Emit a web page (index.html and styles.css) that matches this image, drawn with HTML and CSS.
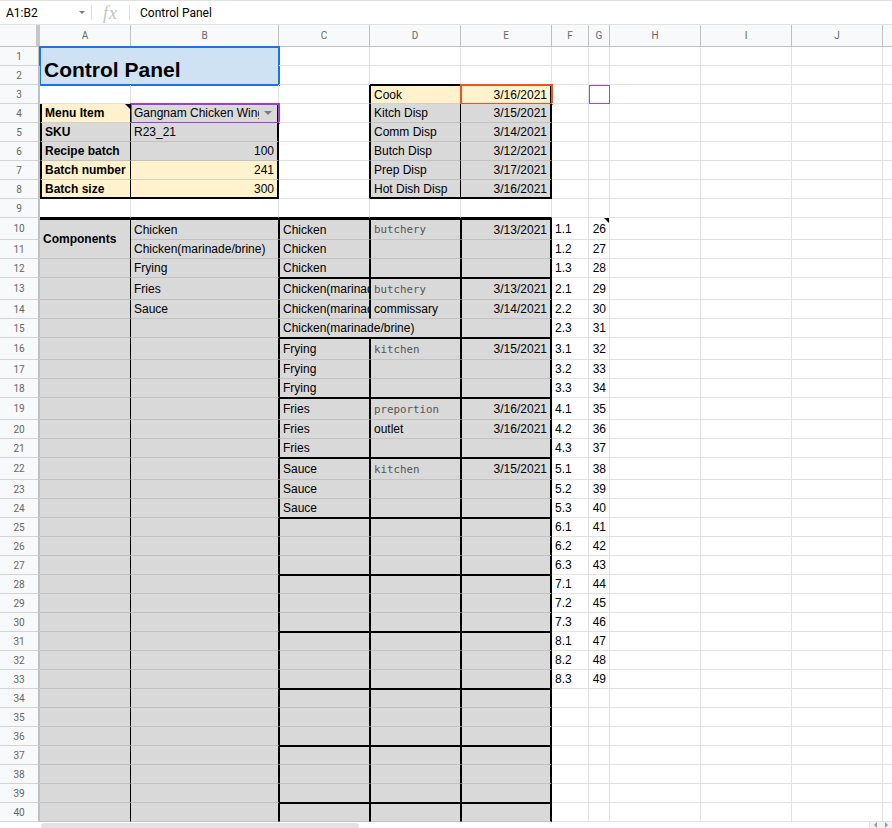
FILE: index.html
```html
<!DOCTYPE html>
<html lang="en">
<head>
<meta charset="utf-8">
<title>Control Panel</title>
<link rel="stylesheet" href="styles.css">
</head>
<body>
<div class="fbar">
  <div class="namebox"><span class="nb-text">A1:B2</span><span class="nb-arrow"></span></div>
  <div class="fsep"></div>
  <div class="fx">fx</div>
  <div class="fsep"></div>
  <div class="fcontent">Control Panel</div>
</div>
<div class="sheet">
<div class="corner"></div><div class="ch">A</div><div class="ch">B</div><div class="ch">C</div><div class="ch">D</div><div class="ch">E</div><div class="ch">F</div><div class="ch">G</div><div class="ch">H</div><div class="ch">I</div><div class="ch">J</div><div class="ch"></div>

<div class="rh">1</div><div class="c title">Control Panel</div><div class="c"></div><div class="c"></div><div class="c"></div><div class="c"></div><div class="c"></div><div class="c"></div><div class="c"></div><div class="c"></div><div class="c"></div>

<div class="rh">2</div><div class="c"></div><div class="c kb"></div><div class="c kb"></div><div class="c"></div><div class="c"></div><div class="c"></div><div class="c"></div><div class="c"></div><div class="c"></div>

<div class="rh">3</div><div class="c"></div><div class="c"></div><div class="c kr"></div><div class="c y kl kt kr">Cook</div><div class="c y r kt kR so">3/16/2021</div><div class="c"></div><div class="c sp"></div><div class="c"></div><div class="c"></div><div class="c"></div><div class="c"></div>

<div class="rh">4</div><div class="c y b kL kr note">Menu Item</div><div class="c g kR dd sp2"><span class="ddt">Gangnam Chicken Wings</span><span class="dda"></span></div><div class="c kr"></div><div class="c g kl kr">Kitch Disp</div><div class="c g r kR">3/15/2021</div><div class="c"></div><div class="c"></div><div class="c"></div><div class="c"></div><div class="c"></div><div class="c"></div>

<div class="rh">5</div><div class="c g b kL kr">SKU</div><div class="c g kR">R23_21</div><div class="c kr"></div><div class="c g kl kr">Comm Disp</div><div class="c g r kR">3/14/2021</div><div class="c"></div><div class="c"></div><div class="c"></div><div class="c"></div><div class="c"></div><div class="c"></div>

<div class="rh">6</div><div class="c g b kL kr">Recipe batch</div><div class="c g r kR">100</div><div class="c kr"></div><div class="c g kl kr">Butch Disp</div><div class="c g r kR">3/12/2021</div><div class="c"></div><div class="c"></div><div class="c"></div><div class="c"></div><div class="c"></div><div class="c"></div>

<div class="rh">7</div><div class="c y b kL kr">Batch number</div><div class="c y r kR">241</div><div class="c kr"></div><div class="c g kl kr">Prep Disp</div><div class="c g r kR">3/17/2021</div><div class="c"></div><div class="c"></div><div class="c"></div><div class="c"></div><div class="c"></div><div class="c"></div>

<div class="rh">8</div><div class="c y b kL kr kB">Batch size</div><div class="c y r kR kB">300</div><div class="c kr"></div><div class="c g kl kr kB">Hot Dish Disp</div><div class="c g r kR kB">3/16/2021</div><div class="c"></div><div class="c"></div><div class="c"></div><div class="c"></div><div class="c"></div><div class="c"></div>

<div class="rh">9</div><div class="c kb"></div><div class="c kb"></div><div class="c kb"></div><div class="c kb"></div><div class="c kb"></div><div class="c"></div><div class="c"></div><div class="c"></div><div class="c"></div><div class="c"></div><div class="c"></div>

<div class="rh">10</div><div class="c g kr kT b rs2">Components</div><div class="c g kr kT">Chicken</div><div class="c g kl kr kT">Chicken</div><div class="c g kl kr kT m">butchery</div><div class="c g kl kR kT r">3/13/2021</div><div class="c">1.1</div><div class="c r note">26</div><div class="c"></div><div class="c"></div><div class="c"></div><div class="c"></div>

<div class="rh">11</div><div class="c g kr">Chicken(marinade/brine)</div><div class="c g kl kr">Chicken</div><div class="c g kl kr"></div><div class="c g kl kR"></div><div class="c">1.2</div><div class="c r">27</div><div class="c"></div><div class="c"></div><div class="c"></div><div class="c"></div>

<div class="rh">12</div><div class="c g kr"></div><div class="c g kr">Frying</div><div class="c g kl kr kb">Chicken</div><div class="c g kl kr kb"></div><div class="c g kl kR kb"></div><div class="c">1.3</div><div class="c r">28</div><div class="c"></div><div class="c"></div><div class="c"></div><div class="c"></div>

<div class="rh">13</div><div class="c g kr"></div><div class="c g kr">Fries</div><div class="c g kl kr kt">Chicken(marinade/brine)</div><div class="c g kl kr kt m">butchery</div><div class="c g kl kR kt r">3/13/2021</div><div class="c">2.1</div><div class="c r">29</div><div class="c"></div><div class="c"></div><div class="c"></div><div class="c"></div>

<div class="rh">14</div><div class="c g kr"></div><div class="c g kr">Sauce</div><div class="c g kl kr">Chicken(marinade/brine)</div><div class="c g kl kr">commissary</div><div class="c g kl kR r">3/14/2021</div><div class="c">2.2</div><div class="c r">30</div><div class="c"></div><div class="c"></div><div class="c"></div><div class="c"></div>

<div class="rh">15</div><div class="c g kr"></div><div class="c g kr"></div><div class="c g kl kr kb cs2">Chicken(marinade/brine)</div><div class="c g kl kR kb"></div><div class="c">2.3</div><div class="c r">31</div><div class="c"></div><div class="c"></div><div class="c"></div><div class="c"></div>

<div class="rh">16</div><div class="c g kr"></div><div class="c g kr"></div><div class="c g kl kr kt">Frying</div><div class="c g kl kr kt m">kitchen</div><div class="c g kl kR kt r">3/15/2021</div><div class="c">3.1</div><div class="c r">32</div><div class="c"></div><div class="c"></div><div class="c"></div><div class="c"></div>

<div class="rh">17</div><div class="c g kr"></div><div class="c g kr"></div><div class="c g kl kr">Frying</div><div class="c g kl kr"></div><div class="c g kl kR"></div><div class="c">3.2</div><div class="c r">33</div><div class="c"></div><div class="c"></div><div class="c"></div><div class="c"></div>

<div class="rh">18</div><div class="c g kr"></div><div class="c g kr"></div><div class="c g kl kr kb">Frying</div><div class="c g kl kr kb"></div><div class="c g kl kR kb"></div><div class="c">3.3</div><div class="c r">34</div><div class="c"></div><div class="c"></div><div class="c"></div><div class="c"></div>

<div class="rh">19</div><div class="c g kr"></div><div class="c g kr"></div><div class="c g kl kr kt">Fries</div><div class="c g kl kr kt m">preportion</div><div class="c g kl kR kt r">3/16/2021</div><div class="c">4.1</div><div class="c r">35</div><div class="c"></div><div class="c"></div><div class="c"></div><div class="c"></div>

<div class="rh">20</div><div class="c g kr"></div><div class="c g kr"></div><div class="c g kl kr">Fries</div><div class="c g kl kr">outlet</div><div class="c g kl kR r">3/16/2021</div><div class="c">4.2</div><div class="c r">36</div><div class="c"></div><div class="c"></div><div class="c"></div><div class="c"></div>

<div class="rh">21</div><div class="c g kr"></div><div class="c g kr"></div><div class="c g kl kr kb">Fries</div><div class="c g kl kr kb"></div><div class="c g kl kR kb"></div><div class="c">4.3</div><div class="c r">37</div><div class="c"></div><div class="c"></div><div class="c"></div><div class="c"></div>

<div class="rh">22</div><div class="c g kr"></div><div class="c g kr"></div><div class="c g kl kr kt">Sauce</div><div class="c g kl kr kt m">kitchen</div><div class="c g kl kR kt r">3/15/2021</div><div class="c">5.1</div><div class="c r">38</div><div class="c"></div><div class="c"></div><div class="c"></div><div class="c"></div>

<div class="rh">23</div><div class="c g kr"></div><div class="c g kr"></div><div class="c g kl kr">Sauce</div><div class="c g kl kr"></div><div class="c g kl kR"></div><div class="c">5.2</div><div class="c r">39</div><div class="c"></div><div class="c"></div><div class="c"></div><div class="c"></div>

<div class="rh">24</div><div class="c g kr"></div><div class="c g kr"></div><div class="c g kl kr kb">Sauce</div><div class="c g kl kr kb"></div><div class="c g kl kR kb"></div><div class="c">5.3</div><div class="c r">40</div><div class="c"></div><div class="c"></div><div class="c"></div><div class="c"></div>

<div class="rh">25</div><div class="c g kr"></div><div class="c g kr"></div><div class="c g kl kr kt"></div><div class="c g kl kr kt"></div><div class="c g kl kR kt"></div><div class="c">6.1</div><div class="c r">41</div><div class="c"></div><div class="c"></div><div class="c"></div><div class="c"></div>

<div class="rh">26</div><div class="c g kr"></div><div class="c g kr"></div><div class="c g kl kr"></div><div class="c g kl kr"></div><div class="c g kl kR"></div><div class="c">6.2</div><div class="c r">42</div><div class="c"></div><div class="c"></div><div class="c"></div><div class="c"></div>

<div class="rh">27</div><div class="c g kr"></div><div class="c g kr"></div><div class="c g kl kr kb"></div><div class="c g kl kr kb"></div><div class="c g kl kR kb"></div><div class="c">6.3</div><div class="c r">43</div><div class="c"></div><div class="c"></div><div class="c"></div><div class="c"></div>

<div class="rh">28</div><div class="c g kr"></div><div class="c g kr"></div><div class="c g kl kr kt"></div><div class="c g kl kr kt"></div><div class="c g kl kR kt"></div><div class="c">7.1</div><div class="c r">44</div><div class="c"></div><div class="c"></div><div class="c"></div><div class="c"></div>

<div class="rh">29</div><div class="c g kr"></div><div class="c g kr"></div><div class="c g kl kr"></div><div class="c g kl kr"></div><div class="c g kl kR"></div><div class="c">7.2</div><div class="c r">45</div><div class="c"></div><div class="c"></div><div class="c"></div><div class="c"></div>

<div class="rh">30</div><div class="c g kr"></div><div class="c g kr"></div><div class="c g kl kr kb"></div><div class="c g kl kr kb"></div><div class="c g kl kR kb"></div><div class="c">7.3</div><div class="c r">46</div><div class="c"></div><div class="c"></div><div class="c"></div><div class="c"></div>

<div class="rh">31</div><div class="c g kr"></div><div class="c g kr"></div><div class="c g kl kr kt"></div><div class="c g kl kr kt"></div><div class="c g kl kR kt"></div><div class="c">8.1</div><div class="c r">47</div><div class="c"></div><div class="c"></div><div class="c"></div><div class="c"></div>

<div class="rh">32</div><div class="c g kr"></div><div class="c g kr"></div><div class="c g kl kr"></div><div class="c g kl kr"></div><div class="c g kl kR"></div><div class="c">8.2</div><div class="c r">48</div><div class="c"></div><div class="c"></div><div class="c"></div><div class="c"></div>

<div class="rh">33</div><div class="c g kr"></div><div class="c g kr"></div><div class="c g kl kr kb"></div><div class="c g kl kr kb"></div><div class="c g kl kR kb"></div><div class="c">8.3</div><div class="c r">49</div><div class="c"></div><div class="c"></div><div class="c"></div><div class="c"></div>

<div class="rh">34</div><div class="c g kr"></div><div class="c g kr"></div><div class="c g kl kr kt"></div><div class="c g kl kr kt"></div><div class="c g kl kR kt"></div><div class="c"></div><div class="c"></div><div class="c"></div><div class="c"></div><div class="c"></div><div class="c"></div>

<div class="rh">35</div><div class="c g kr"></div><div class="c g kr"></div><div class="c g kl kr"></div><div class="c g kl kr"></div><div class="c g kl kR"></div><div class="c"></div><div class="c"></div><div class="c"></div><div class="c"></div><div class="c"></div><div class="c"></div>

<div class="rh">36</div><div class="c g kr"></div><div class="c g kr"></div><div class="c g kl kr kb"></div><div class="c g kl kr kb"></div><div class="c g kl kR kb"></div><div class="c"></div><div class="c"></div><div class="c"></div><div class="c"></div><div class="c"></div><div class="c"></div>

<div class="rh">37</div><div class="c g kr"></div><div class="c g kr"></div><div class="c g kl kr kt"></div><div class="c g kl kr kt"></div><div class="c g kl kR kt"></div><div class="c"></div><div class="c"></div><div class="c"></div><div class="c"></div><div class="c"></div><div class="c"></div>

<div class="rh">38</div><div class="c g kr"></div><div class="c g kr"></div><div class="c g kl kr"></div><div class="c g kl kr"></div><div class="c g kl kR"></div><div class="c"></div><div class="c"></div><div class="c"></div><div class="c"></div><div class="c"></div><div class="c"></div>

<div class="rh">39</div><div class="c g kr"></div><div class="c g kr"></div><div class="c g kl kr kb"></div><div class="c g kl kr kb"></div><div class="c g kl kR kb"></div><div class="c"></div><div class="c"></div><div class="c"></div><div class="c"></div><div class="c"></div><div class="c"></div>

<div class="rh">40</div><div class="c g kr"></div><div class="c g kr"></div><div class="c g kl kr kt"></div><div class="c g kl kr kt"></div><div class="c g kl kR kt"></div><div class="c"></div><div class="c"></div><div class="c"></div><div class="c"></div><div class="c"></div><div class="c"></div>
</div>
<div class="hscroll">
  <div class="hs-gap"></div>
  <div class="hs-thumb"></div>
  <div class="hs-fill"></div>
  <div class="hs-arrows"><span class="hs-a hs-left"></span><span class="hs-a hs-right"></span></div>
</div>
</body>
</html>
```

FILE: styles.css
```css
html, body {
  margin: 0;
  padding: 0;
  background: #fff;
}
body {
  width: 892px;
  height: 828px;
  overflow: hidden;
  font-family: "Liberation Sans", Arial, sans-serif;
}

/* formula bar */
.fbar {
  box-sizing: border-box;
  height: 25px;
  border-top: 1px solid #e2e2e2;
  border-bottom: 1px solid #e2e2e2;
  display: flex;
  align-items: center;
  font-family: Roboto, "Liberation Sans", Arial, sans-serif;
  font-size: 12px;
  color: #000;
}
.namebox {
  box-sizing: border-box;
  width: 91px;
  padding: 0 6px 0 6px;
  display: flex;
  align-items: center;
}
.nb-text { flex: 1; }
.nb-arrow {
  width: 0;
  height: 0;
  border-left: 3px solid transparent;
  border-right: 3px solid transparent;
  border-top: 3px solid #7a7a7a;
}
.fsep {
  width: 1px;
  height: 15px;
  background: #e0e0e0;
}
.fx {
  width: 37px;
  text-align: center;
  font-family: "Liberation Serif", serif;
  font-style: italic;
  font-size: 18px;
  letter-spacing: 1px;
  color: #c4c4c4;
  line-height: 20px;
}
.fcontent {
  padding-left: 10px;
}

/* sheet grid */
.sheet {
  width: 892px;
  overflow: hidden;
  display: grid;
  grid-template-columns: 40px 91px 148px 91px 91px 91px 37px 21px 91px 91px 91px 30px;
  grid-template-rows: 22px repeat(9, 19px)
    22px 19px 19px 22px 19px 19px 22px 19px 19px 22px 19px 19px 22px 19px 19px
    repeat(16, 19px);
}
.corner {
  box-sizing: border-box;
  background: #f8f9fa;
  border-right: 4px solid #c7c7c7;
  border-bottom: 1px solid #c0c0c0;
}
.ch {
  box-sizing: border-box;
  background: #f8f9fa;
  border-right: 1px solid #c0c0c0;
  border-bottom: 1px solid #c0c0c0;
  display: flex;
  align-items: center;
  justify-content: center;
  font-family: Roboto, "Liberation Sans", Arial, sans-serif;
  font-size: 10px;
  color: #666;
}
.rh {
  box-sizing: border-box;
  background: #f8f9fa;
  border-right: 2px solid #c0c0c0;
  border-bottom: 1px solid #d4d4d4;
  display: flex;
  align-items: center;
  justify-content: center;
  font-family: Roboto, "Liberation Sans", Arial, sans-serif;
  font-size: 10px;
  color: #666;
}

.c {
  box-sizing: border-box;
  min-width: 0;
  border-right: 1px solid #e2e2e2;
  border-bottom: 1px solid #e2e2e2;
  padding: 0 3px;
  display: flex;
  align-items: center;
  white-space: nowrap;
  overflow: hidden;
  font-size: 12px;
  color: #000;
}
.g {
  background: #d9d9d9;
  border-right-color: #c2c2c2;
  border-bottom-color: #c2c2c2;
}
.y {
  background: #fff2cc;
  border-right-color: #d6d0be;
  border-bottom-color: #d6d0be;
}
.r { justify-content: flex-end; }
.b { font-weight: bold; }
.m {
  font-family: "DejaVu Sans Mono", "Liberation Mono", monospace;
  font-size: 10.8px;
  color: #555;
}
.rs2 { grid-row: span 2; }
.cs2 { grid-column: span 2; }

/* black borders */
.kr { border-right-color: #000; }
.kb { border-bottom-color: #000; }
.kl { border-left: 1px solid #000; }
.kt { border-top: 1px solid #000; }
.kR { border-right: 2px solid #000; }
.kB { border-bottom: 2px solid #000; }
.kL { border-left: 2px solid #000; }
.kT { border-top: 2px solid #000; }

/* title merged cell */
.title {
  grid-column: span 2;
  grid-row: span 2;
  background: #cfe2f3;
  border-right-color: #c5d3e0;
  border-bottom-color: #c5d3e0;
  align-items: flex-end;
  padding: 0 0 2px 4px;
  font-size: 21px;
  font-weight: bold;
  outline: 2px solid #1a73e8;
  outline-offset: -1px;
}

/* collaborator selections */
.so {
  outline: 2px solid #f4511e;
  outline-offset: -1px;
}
.sp {
  outline: 1px solid #a142f4;
  outline-offset: -1px;
}
.sp2 {
  outline: 2px solid #9c3fd6;
  outline-offset: -1px;
}

/* dropdown cell */
.dd { padding-right: 5px; }
.ddt {
  flex: 1;
  min-width: 0;
  overflow: hidden;
}
.dda {
  width: 0;
  height: 0;
  margin-left: 5px;
  border-left: 4px solid transparent;
  border-right: 4px solid transparent;
  border-top: 4px solid #7d7d7d;
}

/* note indicator */
.note { position: relative; }
.note::after {
  content: "";
  position: absolute;
  top: 0;
  right: 0;
  width: 0;
  height: 0;
  border-style: solid;
  border-width: 0 5px 5px 0;
  border-color: transparent #000 transparent transparent;
}

/* horizontal scrollbar */
.hscroll {
  display: flex;
  height: 6px;
}
.hs-gap { width: 41px; }
.hs-thumb {
  width: 318px;
  background: #e3e3e3;
  border-radius: 3px 3px 0 0;
  margin-top: 1px;
}
.hs-fill { flex: 1; }
.hs-arrows {
  width: 22px;
  display: flex;
  justify-content: space-around;
  align-items: flex-end;
  background: #f3f3f3;
  border-left: 1px solid #e0e0e0;
}
.hs-a {
  width: 0;
  height: 0;
  border-top: 3px solid transparent;
  border-bottom: 3px solid transparent;
}
.hs-left { border-right: 3px solid #9a9a9a; }
.hs-right { border-left: 3px solid #9a9a9a; }
```
